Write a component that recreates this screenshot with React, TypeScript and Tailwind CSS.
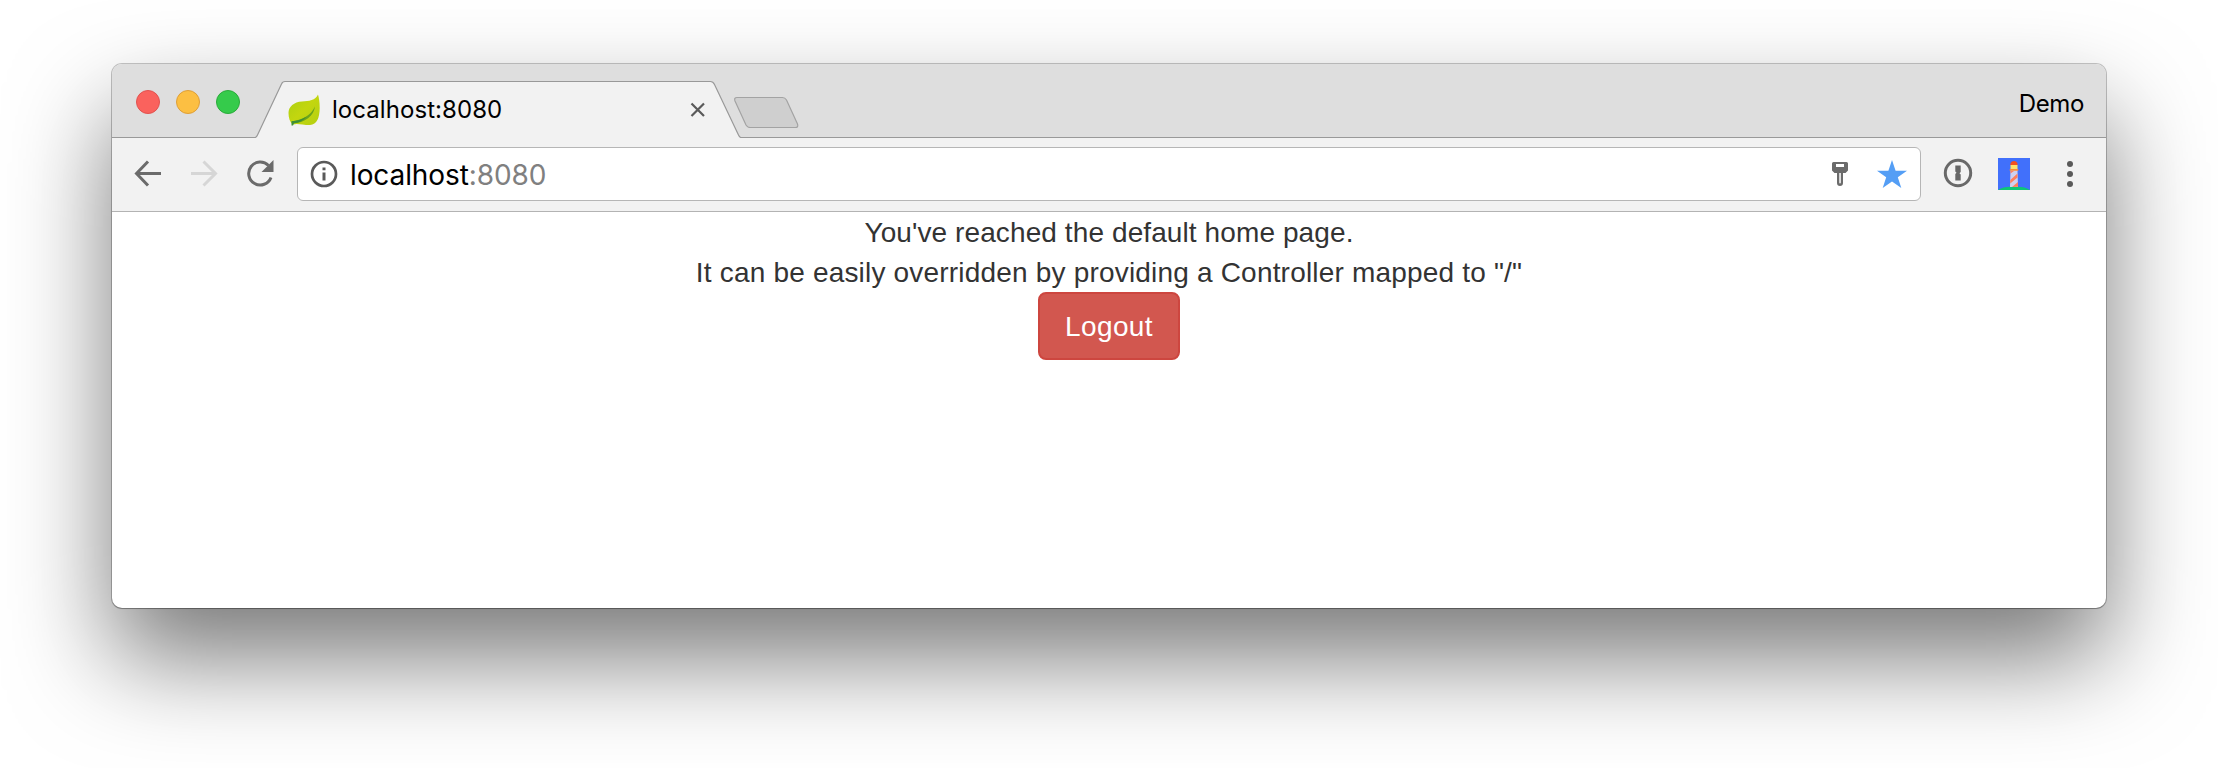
function Leaf() {
  return (
    <svg className="h-8 w-8" viewBox="0 0 32 32">
      <defs>
        <linearGradient id="leaf" x1="0" y1="0" x2="1" y2="1">
          <stop offset="0" stopColor="#a9cf12" />
          <stop offset="0.5" stopColor="#c3d60f" />
          <stop offset="1" stopColor="#b4cf12" />
        </linearGradient>
      </defs>
      <path
        d="M30 0.5C27.5 6.500 21 7 14 7.500C6 8 0.500 12.500 0.500 19C0.500 24 2 28 4.500 30.500C10 29 14 31 22 31C29 30.500 31.500 24 31.700 14C31.700 8 31 4 30 0.500Z"
        fill="url(#leaf)"
      />
      <path d="M3.500 27.500C14 26 22.500 22 27 12.500C26 21.500 17 29 4.500 29.500Z" fill="#6ba31c" />
      <path d="M3.500 27.300C9 27 14 25.500 18.500 22.500C15 27 10 29 6 29.200L5 31.500H3.500Z" fill="#3c8f38" />
    </svg>
  );
}

function Lighthouse() {
  return (
    <svg className="h-8 w-8" viewBox="0 0 32 32">
      <rect width="32" height="32" fill="#4170fb" />
      <path d="M0 32C3 29.500 10 28.500 16 28.500S29 29.500 32 32Z" fill="#0cc777" />
      <path d="M12.500 12H19.500L20 29H12Z" fill="#cfd0ee" />
      <path d="M12.500 13H16L12.400 15.500ZM12.300 22L19.500 15.500V19.500L12.200 25.500ZM14 29L20 24V28.800Z" fill="#ff7f5c" />
      <rect x="12.500" y="7" width="7" height="4.500" fill="#ffe36b" />
      <path d="M12.300 7C12.300 4.500 14 3 16 3S19.700 4.500 19.700 7Z" fill="#f4511e" />
      <rect x="11.700" y="11" width="8.600" height="1.800" rx=".5" fill="#ff8a35" />
    </svg>
  );
}

function TitleBar() {
  return (
    <div className="flex h-[73px] shrink-0 bg-[#dedede]">
      <div className="flex w-[143px] shrink-0 gap-4 pt-[26px] pl-6">
        <span className="size-6 rounded-full border border-[#e2524f] bg-[#fa625d]" />
        <span className="size-6 rounded-full border border-[#df9f37] bg-[#fcbf42]" />
        <span className="size-6 rounded-full border border-[#2aab3a] bg-[#35cb4b]" />
      </div>
      <div className="relative -mb-px h-[74px] w-[486px] shrink-0">
        <svg className="absolute inset-0 h-[74px] w-[486px]" viewBox="0 0 486 74">
          <path d="M0 74V73.500Q1.500 73.500 2.500 71L26.500 20Q27.500 17.500 30 17.500H455.500Q458 17.500 459.500 20.500L483.500 71Q484.500 73.500 486 73.500V74Z" fill="#f2f2f2" />
          <path d="M0 73.500Q1.500 73.500 2.500 71L26.500 20Q27.500 17.500 30 17.500H455.500Q458 17.500 459.500 20.500L483.500 71Q484.500 73.500 486 73.500" fill="none" stroke="#999" strokeWidth="1.200" />
        </svg>
        <div className="relative flex items-center pt-[30px] pl-[33px]">
          <Leaf />
          <span className="ml-3 font-['Inter',sans-serif] text-[24px] leading-8 tracking-[0.06px] text-black">localhost:8080</span>
          <svg className="absolute top-[38px] left-[435px] size-4" viewBox="0 0 16 16" fill="none" stroke="#5a5a5a" strokeWidth="2.200">
            <path d="M1.500 1.500L14 14M14 1.500L1.500 14" />
          </svg>
        </div>
      </div>
      <svg className="mt-8 -ml-[9px] h-8 w-[68px] shrink-0" viewBox="0 0 68 32">
        <path d="M5 1.500H50.500Q53 1.500 54.500 4L65.500 28Q66.500 31.500 63.500 31.500H18Q15.500 31.500 14 29L3 5Q1.800 1.500 5 1.500Z" fill="#cfcfcf" stroke="#a3a3a3" strokeWidth="1.200" />
      </svg>
      <span className="mt-6 mr-[22px] ml-auto font-['Inter',sans-serif] text-[24px] leading-8 tracking-[-0.35px] text-black">Demo</span>
    </div>
  );
}

function Toolbar() {
  return (
    <div className="flex h-[75px] shrink-0 items-start border-y border-t-[#999] border-b-[#b3b3b3] bg-[#f2f2f2]">
      <svg className="mt-[22px] ml-[22px] h-7 w-[27px]" viewBox="0 0 27 28" fill="none" stroke="#6b6b6b" strokeWidth="3">
        <path d="M27 13.500H3M14 1.500L2.500 13.500L14 25.500" />
      </svg>
      <svg className="mt-[22px] ml-[30px] h-7 w-[27px]" viewBox="0 0 27 28" fill="none" stroke="#d6d6d6" strokeWidth="3">
        <path d="M0 13.500H24.500M12.500 1.500L24.500 13.500L12.500 25.500" />
      </svg>
      <svg className="mt-[22px] ml-[28px] h-7 w-7" viewBox="0 0 28 28">
        <path d="M22.500 5.500A11.500 11.500 0 1 0 25 17.500" fill="none" stroke="#6b6b6b" strokeWidth="3" />
        <path d="M27.500 0V12H15.500Z" fill="#6b6b6b" />
      </svg>
      <div className="mt-[9px] ml-[23px] flex h-[54px] w-[1624px] items-start rounded-md border border-[#b6b6b6] bg-white">
        <svg className="mt-3 ml-3 h-7 w-7 shrink-0" viewBox="0 0 28 28">
          <circle cx="14" cy="14" r="12" fill="none" stroke="#5a5a5a" strokeWidth="2.700" />
          <path d="M12.500 7.500H15.500V10.200H12.500ZM12.500 12.500H15.500V20.500H12.500Z" fill="#5a5a5a" />
        </svg>
        <span className="mt-[9px] ml-3 font-['Inter',sans-serif] text-[28px] leading-9 tracking-[-0.1px] text-black">
          localhost<span className="text-[#808080]">:8080</span>
        </span>
        <svg className="mt-[14px] ml-auto h-6 w-4" viewBox="0 0 16 24">
          <path fillRule="evenodd" d="M1.500 0H14.500Q16 0 16 1.500V8.500L13.500 11H11V21Q11 24 8 24T5 21V11H2.500L0 8.500V1.500Q0 0 1.500 0ZM4 2V5H12V2ZM7.300 11V20.500Q7.300 21.500 8 21.500T8.800 20.500V11Z" fill="#6b6b6b" />
        </svg>
        <svg className="mt-3 mr-[13px] ml-[29px] h-7 w-[30px]" viewBox="0 0 30 28">
          <path d="M15 0L18.600 10.700H30L20.800 17.300L24.300 28L15 21.500L5.700 28L9.200 17.300L0 10.700H11.400Z" fill="#549ef5" />
        </svg>
      </div>
      <svg className="mt-[20px] ml-[22px] h-[30px] w-[30px]" viewBox="0 0 30 30">
        <circle cx="15" cy="15" r="12.700" fill="none" stroke="#696969" strokeWidth="3" />
        <path d="M12.300 7.500H17.700V14L16.500 15.200L17.700 16.400V22.500H12.300V16L13.500 14.800L12.300 13.600Z" fill="#666" />
      </svg>
      <div className="mt-5 ml-[25px]">
        <Lighthouse />
      </div>
      <svg className="mt-[22px] ml-[37px] h-7 w-[6px]" viewBox="0 0 6 28" fill="#5a5a5a">
        <circle cx="3" cy="4" r="3" />
        <circle cx="3" cy="14" r="3" />
        <circle cx="3" cy="24" r="3" />
      </svg>
    </div>
  );
}

export default function App() {
  return (
    <div className="h-[768px] w-[2218px] overflow-hidden bg-white pt-16 pl-28">
      <div className="flex h-[544px] w-[1994px] flex-col overflow-hidden rounded-[10px] bg-white shadow-[0_0_0_1px_rgba(0,0,0,0.22),0_1px_1px_rgba(0,0,0,0.2),0_50px_100px_rgba(0,0,0,0.53)]">
        <TitleBar />
        <Toolbar />
        <main className="flex flex-col items-center font-['Liberation_Sans',Arial,sans-serif] text-[28px] leading-10 text-[#333]">
          <div className="-mb-px flex flex-col items-center pt-px">
            <p className="tracking-[0.1px]">You've reached the default home page.</p>
            <p className="tracking-[0.19px]">It can be easily overridden by providing a Controller mapped to "/"</p>
          </div>
          <button className="h-[68px] w-[142px] rounded-lg border-2 border-[#cd463f] bg-[#d2574f] pt-px tracking-[0.4px] text-white">Logout</button>
        </main>
      </div>
    </div>
  );
}
